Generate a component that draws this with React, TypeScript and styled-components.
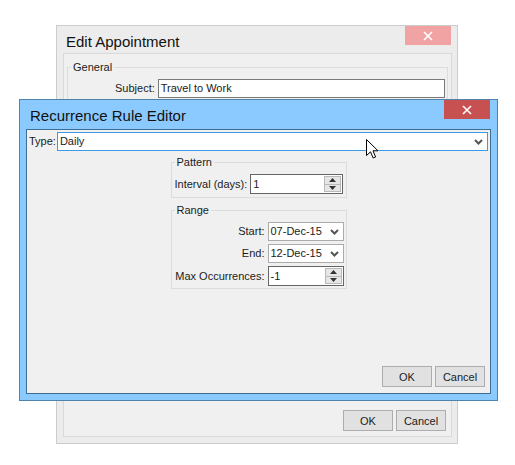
import React from "react";
import styled, { createGlobalStyle } from "styled-components";

const Global = createGlobalStyle`
  html, body { margin: 0; padding: 0; background: #ffffff; }
  body { font-family: "Liberation Sans", Arial, sans-serif; font-size: 11px; color: #1b1b1b; }
  * { box-sizing: border-box; }
`;

const Desktop = styled.div`
  position: relative;
  width: 515px;
  height: 465px;
  overflow: hidden;
`;

const Window = styled.div<{ $left: number; $top: number; $w: number; $h: number; $frame: string; $border: string }>`
  position: absolute;
  left: ${(p) => p.$left}px;
  top: ${(p) => p.$top}px;
  width: ${(p) => p.$w}px;
  height: ${(p) => p.$h}px;
  background: ${(p) => p.$frame};
  border: 1px solid ${(p) => p.$border};
  display: flex;
  flex-direction: column;
`;

const TitleBar = styled.div<{ $h: number; $pr: number }>`
  height: ${(p) => p.$h}px;
  flex: none;
  display: flex;
  align-items: flex-start;
  justify-content: space-between;
  padding-right: ${(p) => p.$pr}px;
`;

const Title = styled.div<{ $pad: number; $top: number }>`
  font-size: 15px;
  color: #111;
  padding-left: ${(p) => p.$pad}px;
  padding-top: ${(p) => p.$top}px;
  line-height: 17px;
`;

const CloseButton = styled.div<{ $bg: string }>`
  width: 46px;
  height: 19px;
  background: ${(p) => p.$bg};
  display: flex;
  align-items: center;
  justify-content: center;
`;

const Panel = styled.div<{ $border: string; $ml: number; $mr: number }>`
  flex: 1;
  margin: 0 ${(p) => p.$mr}px 6px ${(p) => p.$ml}px;
  border: 1px solid ${(p) => p.$border};
  background: #f0f0f0;
  display: flex;
  flex-direction: column;
  padding: 2px;
`;

const Group = styled.fieldset<{ $w?: number }>`
  margin: 0;
  border: 1px solid #dcdcdc;
  padding: 0 2px 2px 3px;
  width: ${(p) => (p.$w ? `${p.$w}px` : "auto")};
  min-width: 0;
`;

const OuterGroup = styled(Group)`
  margin: 5px 1px 0 1px;
`;

const Legend = styled.legend`
  padding: 0 2px;
  margin-left: 0;
  font-size: 11px;
  line-height: 13px;
  color: #1b1b1b;
`;

const FieldRow = styled.div<{ $gap: number; $mt?: number; $mb?: number }>`
  display: flex;
  align-items: center;
  gap: ${(p) => p.$gap}px;
  margin-top: ${(p) => p.$mt ?? 0}px;
  margin-bottom: ${(p) => p.$mb ?? 0}px;
`;

const Label = styled.span`
  white-space: nowrap;
  line-height: 13px;
`;

const RightLabel = styled(Label)`
  justify-self: end;
`;

const Field = styled.div<{ $w?: number; $h: number; $border: string; $grow?: boolean }>`
  position: relative;
  width: ${(p) => (p.$w ? `${p.$w}px` : "auto")};
  flex: ${(p) => (p.$grow ? 1 : "none")};
  height: ${(p) => p.$h}px;
  border: 1px solid ${(p) => p.$border};
  background: #ffffff;
  display: flex;
  align-items: center;
  padding-left: 2px;
  line-height: 13px;
  white-space: nowrap;
`;

const FieldText = styled.span`
  flex: 1;
`;

const Chevron = styled.svg`
  flex: none;
  margin-right: 4px;
`;

const Spinner = styled.div`
  flex: none;
  width: 17px;
  height: 16px;
  margin-right: 1px;
  display: flex;
  flex-direction: column;
`;

const SpinPart = styled.div`
  flex: 1;
  background: #e6e6e6;
  border: 1px solid #b9b9b9;
  display: flex;
  align-items: center;
  justify-content: center;
  & + & { border-top: none; }
`;

const Center = styled.div`
  display: flex;
  flex-direction: column;
  align-items: center;
  gap: 6px;
  margin-top: 5px;
`;

const RangeGrid = styled.div`
  display: grid;
  grid-template-columns: auto 76px;
  column-gap: 3px;
  row-gap: 3px;
  align-items: center;
  margin-top: 5px;
`;

const Spacer = styled.div`
  flex: 1;
`;

const ButtonRow = styled.div<{ $pad: string }>`
  display: flex;
  justify-content: flex-end;
  gap: 3px;
  padding: ${(p) => p.$pad};
`;

const Button = styled.div`
  width: 50px;
  height: 21px;
  background: #e1e1e1;
  border: 1px solid #adadad;
  display: flex;
  align-items: center;
  justify-content: center;
  font-size: 11px;
  color: #1b1b1b;
`;

const SubjectRow = styled.div`
  display: flex;
  align-items: center;
  gap: 3px;
  padding-left: 44px;
  margin-top: 5px;
`;

const Cursor = styled.svg`
  position: absolute;
  left: 366px;
  top: 139px;
`;

const CloseX = () => (
  <svg width="10" height="10" viewBox="0 0 10 10">
    <path d="M1 1 L9 9 M9 1 L1 9" stroke="#ffffff" strokeWidth="1.6" />
  </svg>
);

const Down = () => (
  <Chevron width="9" height="6" viewBox="0 0 9 6">
    <path d="M1 1 L4.5 4.5 L8 1" fill="none" stroke="#555" strokeWidth="2" />
  </Chevron>
);

const Spin = () => (
  <Spinner>
    <SpinPart>
      <svg width="7" height="4" viewBox="0 0 7 4"><path d="M0 4 L3.5 0 L7 4 Z" fill="#333" /></svg>
    </SpinPart>
    <SpinPart>
      <svg width="7" height="4" viewBox="0 0 7 4"><path d="M0 0 L3.5 4 L7 0 Z" fill="#333" /></svg>
    </SpinPart>
  </Spinner>
);

const BackFill = styled.div`
  height: 300px;
`;

export default function App() {
  return (
    <Desktop>
      <Global />
      <Window $left={56} $top={25} $w={402} $h={419} $frame="#ececec" $border="#cccccc">
        <TitleBar $h={27} $pr={6}>
          <Title $pad={9} $top={7}>Edit Appointment</Title>
          <CloseButton $bg="#f1a3a3"><CloseX /></CloseButton>
        </TitleBar>
        <Panel $border="#d9d9d9" $ml={6} $mr={5}>
          <OuterGroup>
            <Legend>General</Legend>
            <SubjectRow>
              <Label>Subject:</Label>
              <Field $grow $h={19} $border="#7a7a7a">
                <FieldText>Travel to Work</FieldText>
              </Field>
            </SubjectRow>
            <BackFill />
          </OuterGroup>
          <Spacer />
          <ButtonRow $pad="0 3px 3px 0">
            <Button>OK</Button>
            <Button>Cancel</Button>
          </ButtonRow>
        </Panel>
      </Window>

      <Window $left={19} $top={99} $w={479} $h={302} $frame="#8bcaff" $border="#4f83ac">
        <TitleBar $h={29} $pr={7}>
          <Title $pad={10} $top={7}>Recurrence Rule Editor</Title>
          <CloseButton $bg="#c75050"><CloseX /></CloseButton>
        </TitleBar>
        <Panel $border="#3e6e92" $ml={6} $mr={6}>
          <FieldRow $gap={1}>
            <Label>Type:</Label>
            <Field $grow $h={19} $border="#3f9ae6">
              <FieldText>Daily</FieldText>
              <Down />
            </Field>
          </FieldRow>
          <Center>
            <Group $w={176}>
              <Legend>Pattern</Legend>
              <FieldRow $gap={3} $mt={5} $mb={1}>
                <Label>Interval (days):</Label>
                <Field $w={93} $h={20} $border="#646464">
                  <FieldText>1</FieldText>
                  <Spin />
                </Field>
              </FieldRow>
            </Group>
            <Group $w={176}>
              <Legend>Range</Legend>
              <RangeGrid>
                <RightLabel>Start:</RightLabel>
                <Field $h={19} $border="#ababab">
                  <FieldText>07-Dec-15</FieldText>
                  <Down />
                </Field>
                <RightLabel>End:</RightLabel>
                <Field $h={19} $border="#ababab">
                  <FieldText>12-Dec-15</FieldText>
                  <Down />
                </Field>
                <RightLabel>Max Occurrences:</RightLabel>
                <Field $h={20} $border="#646464">
                  <FieldText>-1</FieldText>
                  <Spin />
                </Field>
              </RangeGrid>
            </Group>
          </Center>
          <Spacer />
          <ButtonRow $pad="0 3px 4px 0">
            <Button>OK</Button>
            <Button>Cancel</Button>
          </ButtonRow>
        </Panel>
      </Window>

      <Cursor width="13" height="20" viewBox="0 0 13 20">
        <path d="M0.5 0.5 L0.5 16.5 L4.5 12.8 L7.2 19 L9.6 18 L7 11.8 L12 11.8 Z" fill="#ffffff" stroke="#000000" strokeWidth="1" strokeLinejoin="miter" />
      </Cursor>
    </Desktop>
  );
}
